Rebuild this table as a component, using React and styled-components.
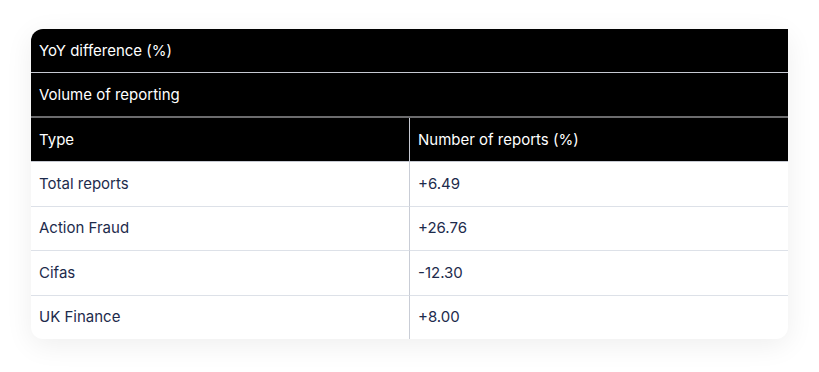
import React from "react";
import styled, { createGlobalStyle } from "styled-components";

const Global = createGlobalStyle`
  html, body { margin: 0; padding: 0; background: #ffffff; }
  body { font-family: Inter, "Noto Sans", "Liberation Sans", sans-serif; }
`;

const Page = styled.div`
  padding: 29px 31px 33px 31px;
`;

const Card = styled.div`
  background: #ffffff;
  border-radius: 12px;
  box-shadow: 0 6px 28px rgba(0, 0, 0, 0.07);
`;

const Table = styled.table`
  width: 100%;
  border-collapse: separate;
  border-spacing: 0;
  table-layout: fixed;
  font-size: 15px;
  line-height: 22px;
`;

const HeadCell = styled.th`
  background: #000000;
  color: #ffffff;
  font-weight: 400;
  text-align: left;
  padding: 10.5px 8px 10.5px 8px;
  border-bottom: ${(p) => (p.$thick ? "2px solid #6b6b6d" : "1px solid #c6c9d2")};
  border-left: ${(p) => (p.$divider ? "1px solid #c6c9d2" : "none")};
  border-top-left-radius: ${(p) => (p.$corner ? "12px" : "0")};
`;

const Cell = styled.td`
  color: #1d2b4c;
  padding: 10.75px 8px;
  border-bottom: ${(p) => (p.$last ? "none" : "1px solid #dde1e8")};
  border-left: ${(p) => (p.$divider ? "1px solid #c9cdd6" : "none")};
  border-bottom-right-radius: ${(p) => (p.$corner ? "12px" : "0")};
`;

const rows = [
  ["Total reports", "+6.49"],
  ["Action Fraud", "+26.76"],
  ["Cifas", "-12.30"],
  ["UK Finance", "+8.00"],
];

export default function App() {
  return (
    <>
      <Global />
      <Page>
        <Card>
          <Table>
            <colgroup>
              <col style={{ width: "378px" }} />
              <col />
            </colgroup>
            <thead>
              <tr>
                <HeadCell colSpan={2} $corner>YoY difference (%)</HeadCell>
              </tr>
              <tr>
                <HeadCell colSpan={2} $thick>Volume of reporting</HeadCell>
              </tr>
              <tr>
                <HeadCell>Type</HeadCell>
                <HeadCell $divider>Number of reports (%)</HeadCell>
              </tr>
            </thead>
            <tbody>
              {rows.map(([t, v], i) => {
                const last = i === rows.length - 1;
                return (
                  <tr key={t}>
                    <Cell $last={last}>{t}</Cell>
                    <Cell $divider $last={last} $corner={last}>{v}</Cell>
                  </tr>
                );
              })}
            </tbody>
          </Table>
        </Card>
      </Page>
    </>
  );
}
